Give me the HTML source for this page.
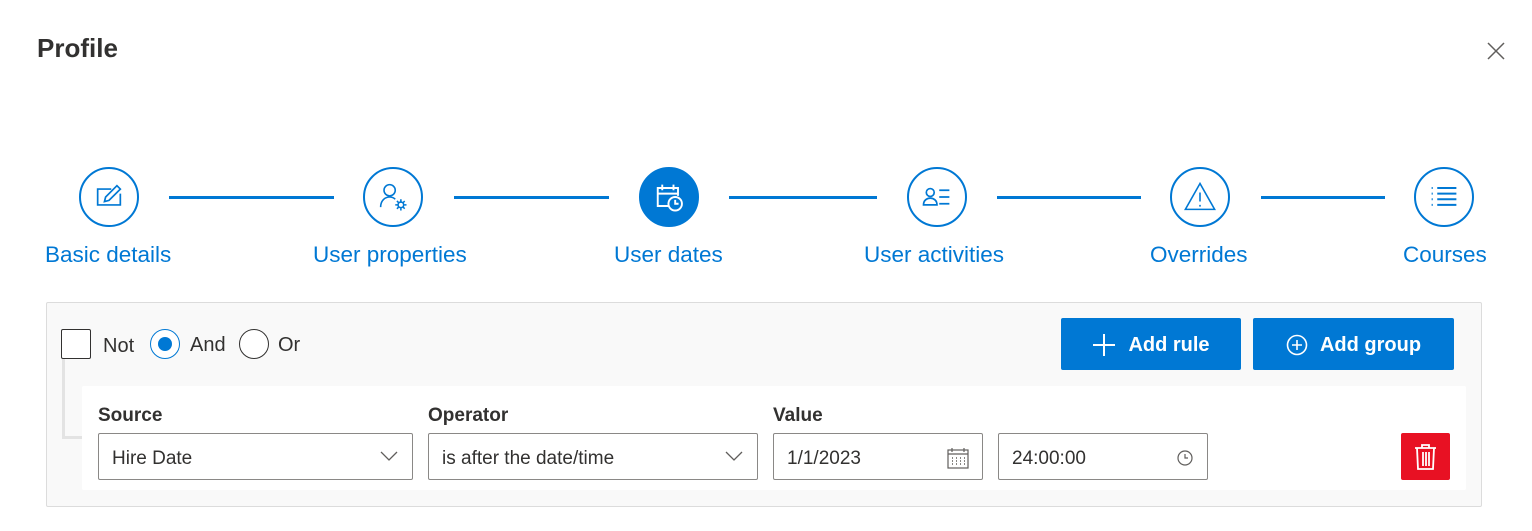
<!DOCTYPE html>
<html><head><style>
*{box-sizing:border-box;margin:0;padding:0}
body{width:1532px;height:531px;background:#fff;font-family:"Liberation Sans",sans-serif;position:relative;overflow:hidden;color:#323130}
.a{position:absolute}
.circ{position:absolute;width:60px;height:60px;border:2.5px solid #0078d4;border-radius:50%;top:167px;display:flex;align-items:center;justify-content:center;background:#fff}
.line{position:absolute;top:196px;height:3px;background:#0078d4}
.lbl{position:absolute;top:242px;font-size:22.5px;color:#0078d4;white-space:nowrap}
.in{position:absolute;top:433px;height:47px;border:1px solid #8a8886;border-radius:2px;background:#fff;font-size:19px;padding-left:13px;line-height:49px;color:#323130}
.fl{position:absolute;top:405px;font-size:19px;font-weight:bold;color:#323130}
.btn{position:absolute;top:318px;height:52px;background:#0078d4;border-radius:2px;color:#fff;font-weight:bold;font-size:20px;display:flex;align-items:center;justify-content:center;gap:12px;padding-top:2px}
</style></head><body>
<div class="a" style="left:37px;top:33px;font-size:26px;font-weight:bold;color:#323130">Profile</div>
<svg class="a" style="left:1486px;top:41px" width="20" height="20"><path d="M2 2L18 18M18 2L2 18" stroke="#605e5c" stroke-width="1.5"/></svg>

<div class="line" style="left:169px;width:165px"></div>
<div class="line" style="left:454px;width:155px"></div>
<div class="line" style="left:729px;width:148px"></div>
<div class="line" style="left:997px;width:144px"></div>
<div class="line" style="left:1261px;width:124px"></div>

<div class="circ" style="left:79px"><svg width="34" height="34" viewBox="0 0 30 30" fill="none" stroke="#0078d4" stroke-width="1.5"><path d="M17 8H5v14h20V12"/><path d="M11 19l1-4 10-10 3 3-10 10z"/></svg></div>
<div class="circ" style="left:363px"><svg width="36" height="36" viewBox="0 0 32 32" fill="none" stroke="#0078d4" stroke-width="1.4"><circle cx="13" cy="10" r="5"/><path d="M5 25c0-6 4-9 8-9 2 0 4 1 5 2"/><circle cx="23" cy="23" r="2.5"/><path d="M23 18v2M23 26v2M18 23h2M26 23h2M19.5 19.5l1.4 1.4M25 25l1.4 1.4M19.5 26.5l1.4-1.4M25 21l1.4-1.4"/></svg></div>
<div class="circ" style="left:639px;background:#0078d4"><svg width="36" height="36" viewBox="0 0 32 32" fill="none" stroke="#fff" stroke-width="1.7"><path d="M16 24H6V8h18v7M6 13h18M10 5v5M20 5v5"/><circle cx="21.5" cy="22" r="6" fill="#0078d4"/><path d="M21.5 18.5V22h3"/></svg></div>
<div class="circ" style="left:907px"><svg width="36" height="36" viewBox="0 0 32 32" fill="none" stroke="#0078d4" stroke-width="1.5"><circle cx="10" cy="12" r="3.5"/><path d="M4 23c0-4 3-6 6-6s6 2 6 6z"/><path d="M18 10h9M18 16h9M18 22h9"/></svg></div>
<div class="circ" style="left:1170px"><svg width="36" height="36" viewBox="0 0 32 32" fill="none" stroke="#0078d4" stroke-width="1.4"><path d="M16 4L3 27h26z"/><path d="M16 12v8M16 23v1.5"/></svg></div>
<div class="circ" style="left:1414px"><svg width="36" height="36" viewBox="0 0 32 32" fill="none" stroke="#0078d4" stroke-width="1.7"><path d="M10 8h17M10 13h17M10 18h17M10 23h17M5 8h1M5 13h1M5 18h1M5 23h1"/></svg></div>

<div class="lbl" style="left:45px">Basic details</div>
<div class="lbl" style="left:313px">User properties</div>
<div class="lbl" style="left:614px">User dates</div>
<div class="lbl" style="left:864px">User activities</div>
<div class="lbl" style="left:1150px">Overrides</div>
<div class="lbl" style="left:1403px">Courses</div>

<div class="a" style="left:46px;top:302px;width:1436px;height:205px;background:#f9f9f9;border:1px solid #dcdcdc;border-radius:2px"></div>
<div class="a" style="left:62px;top:359px;width:3px;height:80px;background:#e3e3e3"></div>
<div class="a" style="left:62px;top:436px;width:22px;height:3px;background:#e3e3e3"></div>
<div class="a" style="left:82px;top:386px;width:1384px;height:104px;background:#fff;border-radius:2px"></div>

<div class="a" style="left:61px;top:329px;width:30px;height:30px;border:1px solid #323130;border-radius:2px;background:#fff"></div>
<div class="a" style="left:103px;top:335px;font-size:20px">Not</div>
<div class="a" style="left:150px;top:329px;width:30px;height:30px;border:1.5px solid #0078d4;border-radius:50%;background:#fff"></div>
<div class="a" style="left:158px;top:337px;width:14px;height:14px;border-radius:50%;background:#0078d4"></div>
<div class="a" style="left:190px;top:334px;font-size:20px">And</div>
<div class="a" style="left:239px;top:329px;width:30px;height:30px;border:1px solid #323130;border-radius:50%;background:#fff"></div>
<div class="a" style="left:278px;top:334px;font-size:20px">Or</div>

<div class="btn" style="left:1061px;width:180px"><svg width="24" height="24"><path d="M12 1v22M1 12h22" stroke="#fff" stroke-width="2"/></svg>Add rule</div>
<div class="btn" style="left:1253px;width:201px"><svg width="22" height="22" fill="none" stroke="#fff" stroke-width="1.6"><circle cx="11" cy="11" r="9.5"/><path d="M11 6v10M6 11h10"/></svg>Add group</div>

<div class="fl" style="left:98px">Source</div>
<div class="fl" style="left:428px">Operator</div>
<div class="fl" style="left:773px">Value</div>
<div class="in" style="left:98px;width:315px">Hire Date<svg class="a" style="right:14px;top:17px" width="18" height="11"><path d="M1 1l8 8 8-8" stroke="#605e5c" fill="none" stroke-width="1.3"/></svg></div>
<div class="in" style="left:428px;width:330px">is after the date/time<svg class="a" style="right:14px;top:17px" width="18" height="11"><path d="M1 1l8 8 8-8" stroke="#605e5c" fill="none" stroke-width="1.3"/></svg></div>
<div class="in" style="left:773px;width:210px">1/1/2023<svg class="a" style="right:12px;top:12px" width="24" height="24" fill="none" stroke="#605e5c" stroke-width="1.2"><rect x="2" y="4" width="20" height="18"/><path d="M2 8h20M6 2v4M18 2v4"/><path d="M6 12h1M10 12h1M14 12h1M18 12h1M6 15h1M10 15h1M14 15h1M18 15h1M6 18h1M10 18h1M14 18h1M18 18h1" stroke-width="1.5"/></svg></div>
<div class="in" style="left:998px;width:210px">24:00:00<svg class="a" style="right:14px;top:16px" width="16" height="16" fill="none" stroke="#605e5c" stroke-width="1.2"><circle cx="8" cy="8" r="7"/><path d="M8 4v4h3"/></svg></div>
<div class="a" style="left:1401px;top:433px;width:49px;height:47px;background:#e81123;border-radius:2px"><svg class="a" style="left:13px;top:11px" width="23" height="26" fill="none" stroke="#fff" stroke-width="1.8"><path d="M1 4h21M8 4V1h7v3M3 4l1 21h15l1-21M9 8v14M12 8v14M15 8v14"/></svg></div>
</body></html>
